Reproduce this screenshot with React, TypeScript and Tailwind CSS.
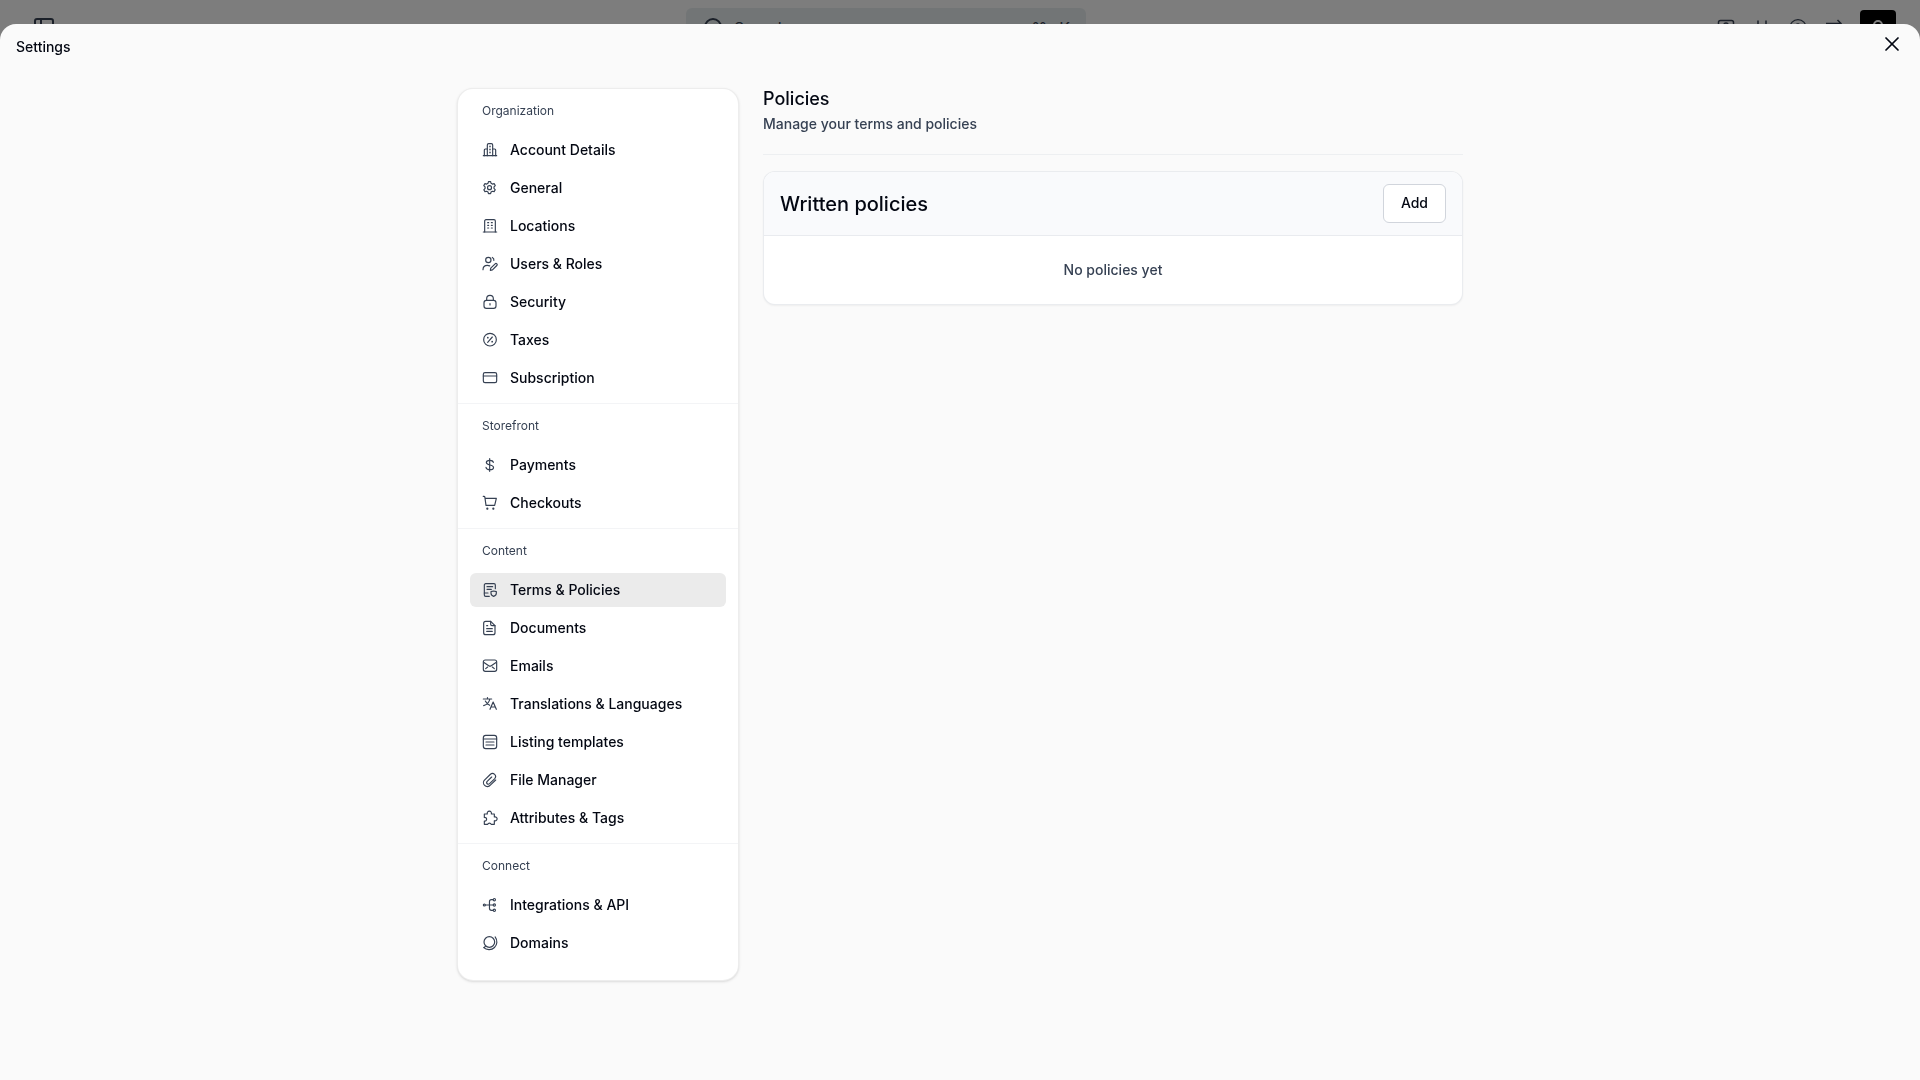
import type { ReactNode } from 'react';
import { CircleHelp, PanelLeft, Search, User, X } from 'lucide-react';

type NavItem = {
  label: string;
  icon: ReactNode;
};

type NavSection = {
  title: string;
  items: NavItem[];
};

const ACTIVE_ITEM = 'Terms & Policies';

function Icon({ children }: { children: ReactNode }) {
  return (
    <svg
      viewBox="0 0 24 24"
      className="size-4 shrink-0 text-gray-700"
      fill="none"
      stroke="currentColor"
      strokeWidth="1.75"
      strokeLinecap="round"
      strokeLinejoin="round"
      aria-hidden="true"
    >
      {children}
    </svg>
  );
}

const sections: NavSection[] = [
  {
    title: 'Organization',
    items: [
      {
        label: 'Account Details',
        icon: (
          <Icon>
            <path d="M2 20.5h20" />
            <path d="M8 20.5v-16a2 2 0 0 1 2-2h4a2 2 0 0 1 2 2v16" />
            <path d="M3.5 20.5V12A1.500 1.500 0 0 1 5 10.500h3" />
            <path d="M16 10.500h3a1.500 1.500 0 0 1 1.500 1.500v8.500" />
            <path d="M12 6.500v.5M12 11v.5M12 15.500v.5" strokeWidth="2.200" />
          </Icon>
        ),
      },
      {
        label: 'General',
        icon: (
          <Icon>
            <path d="M9.500 4 10.200 1.500h3.200L14.100 4l1.900 1.100 2.700-.6 1.700 2.800-1.900 2v2.400l1.900 2-1.700 2.800-2.700-.6-1.900 1.100-.7 2.500h-3.200L9.500 17l-1.900-1.100-2.700.6-1.700-2.800 1.900-2V9.300l-1.900-2 1.700-2.800 2.700.6z" transform="translate(-.5 1)" />
            <circle cx="11.300" cy="11.500" r="3" />
          </Icon>
        ),
      },
      {
        label: 'Locations',
        icon: (
          <Icon>
            <path d="M2 21h20" />
            <path d="M4 21V4.500a2 2 0 0 1 2-2h12a2 2 0 0 1 2 2V21" />
            <path d="M8.500 7h1.500M14 7h1.500M8.500 11h1.500M14 11h1.500M8.500 15h1.500M14 15h1.500" />
          </Icon>
        ),
      },
      {
        label: 'Users & Roles',
        icon: (
          <Icon>
            <circle cx="9.500" cy="6" r="4" />
            <path d="M15.500 2.200a4.200 4.200 0 0 1 2.300 4.500" />
            <path d="M1.500 20.500c0-4 2.500-6.500 6.500-6.500 1.500 0 2.500.3 3.500.8" />
            <path d="m12.500 21.500.6-3.200 6.600-6.600a1.600 1.600 0 0 1 2.500 2.500l-6.500 6.600z" />
          </Icon>
        ),
      },
      {
        label: 'Security',
        icon: (
          <Icon>
            <path d="M7 9.500V7a5 5 0 0 1 10 0v2.500" />
            <rect x="3" y="9.500" width="18" height="12" rx="3.500" />
            <path d="M12 14.500v2" />
          </Icon>
        ),
      },
      {
        label: 'Taxes',
        icon: (
          <Icon>
            <circle cx="12" cy="11.500" r="9.500" />
            <path d="m8.500 15.500 7-8" />
            <path d="M8.700 8.500h.1M15.200 14.500h.1" strokeWidth="2.500" />
          </Icon>
        ),
      },
      {
        label: 'Subscription',
        icon: (
          <Icon>
            <rect x="2" y="4" width="20" height="15" rx="2.500" />
            <path d="M2 9h20" />
          </Icon>
        ),
      },
    ],
  },
  {
    title: 'Storefront',
    items: [
      {
        label: 'Payments',
        icon: (
          <Icon>
            <path d="M11.500 2.500v19" />
            <path d="M17 8c-.5-2-2.300-3-5.300-3C8.500 5 6.500 6.300 6.500 8.400c0 5 10.800 2.200 10.800 7.200 0 2.200-2.300 3.400-5.600 3.400S6.400 17.700 6 15.500" />
          </Icon>
        ),
      },
      {
        label: 'Checkouts',
        icon: (
          <Icon>
            <path d="M1.800 2h1a1.500 1.500 0 0 1 1.500 1.300L6 15.500h13L21.500 5H5" />
            <circle cx="8" cy="20.500" r=".8" fill="currentColor" />
            <circle cx="17" cy="20.500" r=".8" fill="currentColor" />
          </Icon>
        ),
      },
    ],
  },
  {
    title: 'Content',
    items: [
      {
        label: 'Terms & Policies',
        icon: (
          <Icon>
            <path d="M20 10V4.500a2 2 0 0 0-2-2H5.500a2 2 0 0 0-2 2v15a2 2 0 0 0 2 2H11" />
            <path d="M7.500 7h8.500M7.500 11h6.500M3.500 16.500H9" />
            <path d="M13.500 14.500 17.500 13.500l4 1v2.500c0 2.200-1.600 3.700-4 4.500-2.400-.8-4-2.300-4-4.500z" />
          </Icon>
        ),
      },
      {
        label: 'Documents',
        icon: (
          <Icon>
            <path d="M13 2H5.500a3 3 0 0 0-3 3v14a3 3 0 0 0 3 3h11a3 3 0 0 0 3-3V8.500z" />
            <path d="M13 2v4.500a2 2 0 0 0 2 2h4.500" />
            <path d="M7 8.500h1.500M7 13h8.500M7 17h8.500" />
          </Icon>
        ),
      },
      {
        label: 'Emails',
        icon: (
          <Icon>
            <rect x="2" y="3" width="20" height="17" rx="3" />
            <path d="m3.500 7 6.600 4.600a3.300 3.300 0 0 0 3.800 0L20.500 7" />
            <path d="m5.500 16 3-2.500M18.500 16l-3-2.500" />
          </Icon>
        ),
      },
      {
        label: 'Translations & Languages',
        icon: (
          <Icon>
            <path d="M2 4.500h12.500M8.200 2.200v2.300M11.800 4.500C10.800 9.500 7 13 2.500 14.500M5 7.500c1.500 3 3.500 5 6.500 6.500" />
            <path d="m12 20 4.700-11L21.500 20M13.500 16.500h6.500" />
          </Icon>
        ),
      },
      {
        label: 'Listing templates',
        icon: (
          <Icon>
            <rect x="2" y="2" width="20" height="20" rx="3.500" />
            <path d="M2 7.500h20M6 12h12M6 16.500h12" />
          </Icon>
        ),
      },
      {
        label: 'File Manager',
        icon: (
          <Icon>
            <path d="m20.500 12-8 7.800a5.600 5.600 0 0 1-8.500.2 5.600 5.600 0 0 1-.3-7.900l8.600-8.400c4.500-4 11 1.500 6.500 6.500l-7.500 7.300c-2.500 2.200-5.800-.8-3.500-3.500l6.700-6.500" />
          </Icon>
        ),
      },
      {
        label: 'Attributes & Tags',
        icon: (
          <Icon>
            <path d="M3.500 6H8a3.200 3.200 0 1 1 6 0h4.500v4.500a3 3 0 1 1 0 5.500v5.500h-4.700a2.800 2.800 0 0 0-5.300 0H3.500v-5a2.700 2.700 0 1 0 0-5.200z" />
          </Icon>
        ),
      },
    ],
  },
  {
    title: 'Connect',
    items: [
      {
        label: 'Integrations & API',
        icon: (
          <Icon>
            <circle cx="3.500" cy="12" r="1.500" />
            <circle cx="18.500" cy="4" r="1.700" />
            <circle cx="18.500" cy="12" r="1.700" />
            <circle cx="18.500" cy="20" r="1.700" />
            <path d="M5 12h11.500M16.500 4h-2.300a3 3 0 0 0-3 3v10a3 3 0 0 0 3 3h2.300" />
          </Icon>
        ),
      },
      {
        label: 'Domains',
        icon: (
          <Icon>
            <circle cx="11" cy="10.500" r="8" />
            <path d="M19.700 2.800c4 5.200 3.200 12-1 15.900-4.200 4-11.500 4.500-16.200.3.700-.2 1.700-.9 2.500-2" />
          </Icon>
        ),
      },
    ],
  },
];

function TopBar() {
  return (
    <header className="flex h-14 items-center justify-between bg-neutral-50 pr-6 pl-8 text-gray-700">
      <button type="button" aria-label="Toggle sidebar">
        <PanelLeft className="size-6" />
      </button>
      <label className="flex h-10 w-[400px] items-center gap-2 rounded-md bg-[#e4eaec] px-4">
        <Search className="size-6" />
        <input
          type="text"
          placeholder="Search"
          aria-label="Search"
          className="min-w-0 flex-1 bg-transparent text-base outline-none placeholder:text-gray-700"
        />
        <kbd className="flex gap-3 font-[Inter,'DejaVu_Sans',sans-serif] text-base">
          <span>⌘</span>
          <span>K</span>
        </kbd>
      </label>
      <div className="flex items-center gap-4">
        <button type="button" aria-label="What's new">
          <svg viewBox="0 0 20 20" className="size-5" fill="none" stroke="currentColor" strokeWidth="1.5">
            <rect x="2.500" y="2.500" width="15" height="15" rx="2" />
            <circle cx="10" cy="7" r="2" />
          </svg>
        </button>
        <button type="button" aria-label="Shortcuts">
          <svg viewBox="0 0 20 20" className="size-5" fill="none" stroke="currentColor" strokeWidth="1.5">
            <path d="M6 2.500v15M14 2.500v15" />
          </svg>
        </button>
        <button type="button" aria-label="Help">
          <CircleHelp className="size-5" strokeWidth={1.5} />
        </button>
        <button type="button" aria-label="Switch">
          <svg viewBox="0 0 20 20" className="size-5" fill="none" stroke="currentColor" strokeWidth="1.5">
            <path d="M2 5.500h15M13.500 2 17 5.500 13.500 9M18 14H3" />
          </svg>
        </button>
        <button type="button" aria-label="Account" className="flex size-9 justify-center rounded bg-black pt-2 text-white">
          <User className="size-6" />
        </button>
      </div>
    </header>
  );
}

function SettingsNav() {
  return (
    <nav className="w-[282px] shrink-0 divide-y divide-gray-100 rounded-2xl border border-neutral-200/70 bg-white pb-3 shadow-sm">
      {sections.map((section) => (
        <section key={section.title} className="px-3 pb-2">
          <h2 className="px-3 py-[14px] text-xs text-gray-700">{section.title}</h2>
          <ul className="flex flex-col gap-1">
            {section.items.map((item) => (
              <li key={item.label}>
                <a
                  href="#"
                  aria-current={item.label === ACTIVE_ITEM ? 'page' : undefined}
                  className={`flex items-center gap-3 rounded-md px-3 py-[7px] text-sm font-medium ${
                    item.label === ACTIVE_ITEM ? 'bg-[#ebebeb]' : 'hover:bg-gray-50'
                  }`}
                >
                  {item.icon}
                  {item.label}
                </a>
              </li>
            ))}
          </ul>
        </section>
      ))}
    </nav>
  );
}

function Policies() {
  return (
    <main className="min-w-0 flex-1">
      <div className="border-b border-gray-200/60 pb-5">
        <h1 className="text-lg leading-[22px] font-medium">Policies</h1>
        <p className="mt-1 text-sm font-medium text-gray-700">Manage your terms and policies</p>
      </div>
      <section className="mt-4 overflow-hidden rounded-xl border border-gray-200/80 bg-white shadow-xs">
        <div className="flex items-center justify-between border-b border-gray-200/80 bg-[#f9fafc] px-4 py-3">
          <h2 className="text-xl leading-6 font-medium">Written policies</h2>
          <button
            type="button"
            className="rounded-md border border-gray-300 bg-white px-[17px] pt-2 pb-[9px] text-sm font-medium"
          >
            Add
          </button>
        </div>
        <p className="py-6 text-center text-sm font-medium text-gray-700">No policies yet</p>
      </section>
    </main>
  );
}

export default function App() {
  return (
    <div className="min-h-screen bg-neutral-50 font-[Inter,sans-serif] text-gray-950">
      <TopBar />
      <div className="fixed inset-0 bg-black/50" />
      <div
        role="dialog"
        aria-labelledby="settings-title"
        className="fixed inset-x-0 top-6 bottom-0 overflow-y-auto rounded-t-2xl bg-neutral-50"
      >
        <div className="flex h-10 items-center justify-between px-4">
          <p id="settings-title" className="pt-1.5 text-sm font-medium">
            Settings
          </p>
          <button type="button" aria-label="Close">
            <X className="size-6" strokeWidth={1.75} />
          </button>
        </div>
        <div className="mx-auto flex max-w-[1006px] items-start gap-6 pt-6 pb-12">
          <SettingsNav />
          <Policies />
        </div>
      </div>
    </div>
  );
}
